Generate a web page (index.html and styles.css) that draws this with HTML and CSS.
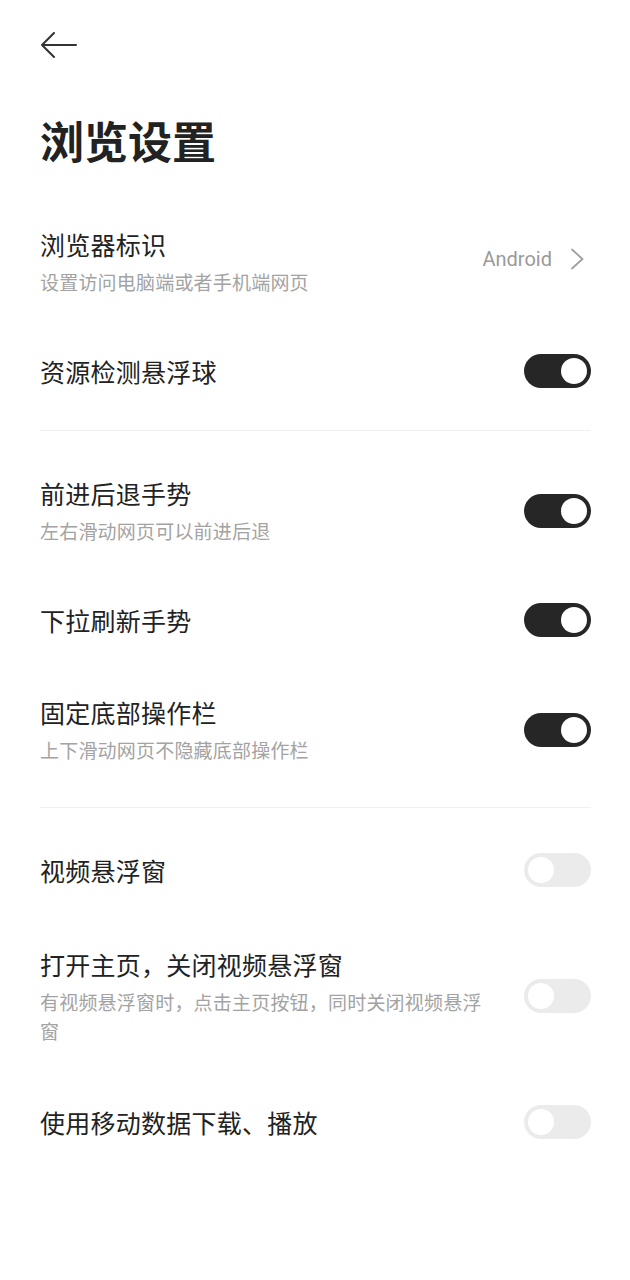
FILE: index.html
```html
<!DOCTYPE html>
<html lang="zh-CN">
<head>
<meta charset="utf-8">
<title>浏览设置</title>
<link rel="stylesheet" href="styles.css">
</head>
<body>
<div class="page">
  <div class="topbar">
    <svg class="back" width="36" height="28" viewBox="0 0 36 28"><path d="M13 2 L1 14 L13 26 M1 14 H35" fill="none" stroke="#333" stroke-width="2" stroke-linecap="round" stroke-linejoin="round"/></svg>
  </div>
  <h1 class="title">浏览设置</h1>

  <div class="list">
    <div class="row">
      <div class="text">
        <div class="name">浏览器标识</div>
        <div class="desc">设置访问电脑端或者手机端网页</div>
      </div>
      <div class="value">
        <span class="value-text">Android</span>
        <svg class="chev" width="20" height="22" viewBox="0 0 20 22"><path d="M1 1.5 L11.5 11 L1 20.5" fill="none" stroke="#a0a0a0" stroke-width="1.8" stroke-linecap="round" stroke-linejoin="round"/></svg>
      </div>
    </div>
    <div class="row">
      <div class="text"><div class="name">资源检测悬浮球</div></div>
      <div class="switch on"><span class="knob"></span></div>
    </div>
  </div>

  <div class="divider"></div>

  <div class="list">
    <div class="row">
      <div class="text">
        <div class="name">前进后退手势</div>
        <div class="desc">左右滑动网页可以前进后退</div>
      </div>
      <div class="switch on"><span class="knob"></span></div>
    </div>
    <div class="row">
      <div class="text"><div class="name">下拉刷新手势</div></div>
      <div class="switch on"><span class="knob"></span></div>
    </div>
    <div class="row">
      <div class="text">
        <div class="name">固定底部操作栏</div>
        <div class="desc">上下滑动网页不隐藏底部操作栏</div>
      </div>
      <div class="switch on"><span class="knob"></span></div>
    </div>
  </div>

  <div class="divider second"></div>

  <div class="list loose">
    <div class="row">
      <div class="text"><div class="name">视频悬浮窗</div></div>
      <div class="switch"><span class="knob"></span></div>
    </div>
    <div class="row">
      <div class="text">
        <div class="name">打开主页，关闭视频悬浮窗</div>
        <div class="desc">有视频悬浮窗时，点击主页按钮，同时关闭视频悬浮窗</div>
      </div>
      <div class="switch"><span class="knob"></span></div>
    </div>
    <div class="row">
      <div class="text"><div class="name">使用移动数据下载、播放</div></div>
      <div class="switch"><span class="knob"></span></div>
    </div>
  </div>
</div>
</body>
</html>
```
FILE: styles.css
```css
* { box-sizing: border-box; }
html, body { margin: 0; padding: 0; background: #fff; }
body {
  font-family: "Noto Sans CJK SC", "Noto Sans", Roboto, sans-serif;
  color: #222;
}
.page { padding: 0 39px 0 40px; }
.topbar { height: 70px; padding-top: 31px; }
.back { display: block; margin-left: 1px; }
.title {
  margin: 40px 0 0;
  font-size: 44px;
  line-height: 60px;
  font-weight: 700;
  color: #222;
  height: 60px;
}
.list { display: flex; flex-direction: column; }
.title + .list { margin-top: 28px; }
.row {
  display: flex;
  align-items: center;
  justify-content: space-between;
  gap: 36px;
  padding: 29px 0;
}
.loose .row { padding: 30px 0; }
.text { flex: 1; min-width: 0; }
.name { font-size: 25px; line-height: 34px; color: #222; letter-spacing: 0.25px; }
.desc { font-size: 19px; line-height: 29px; margin-top: 6px; color: #a3a3a3; letter-spacing: 0.2px; }
.value { display: flex; align-items: center; gap: 19px; margin-top: -6px; }
.value-text { font-family: Roboto, "Noto Sans", sans-serif; font-size: 20px; color: #9a9a9a; }
.chev { display: block; }
.switch {
  flex: none;
  width: 67px;
  height: 34px;
  border-radius: 17px;
  background: #ebebeb;
  padding: 4px;
  display: flex;
  justify-content: flex-start;
}
.switch.on { background: #262626; justify-content: flex-end; }
.knob { width: 26px; height: 26px; border-radius: 50%; background: #fff; display: block; }
.divider { height: 1px; background: #f0f0f0; margin: 13px 0 16px; }
.divider.second { margin: 14px 0 15px; }
```
